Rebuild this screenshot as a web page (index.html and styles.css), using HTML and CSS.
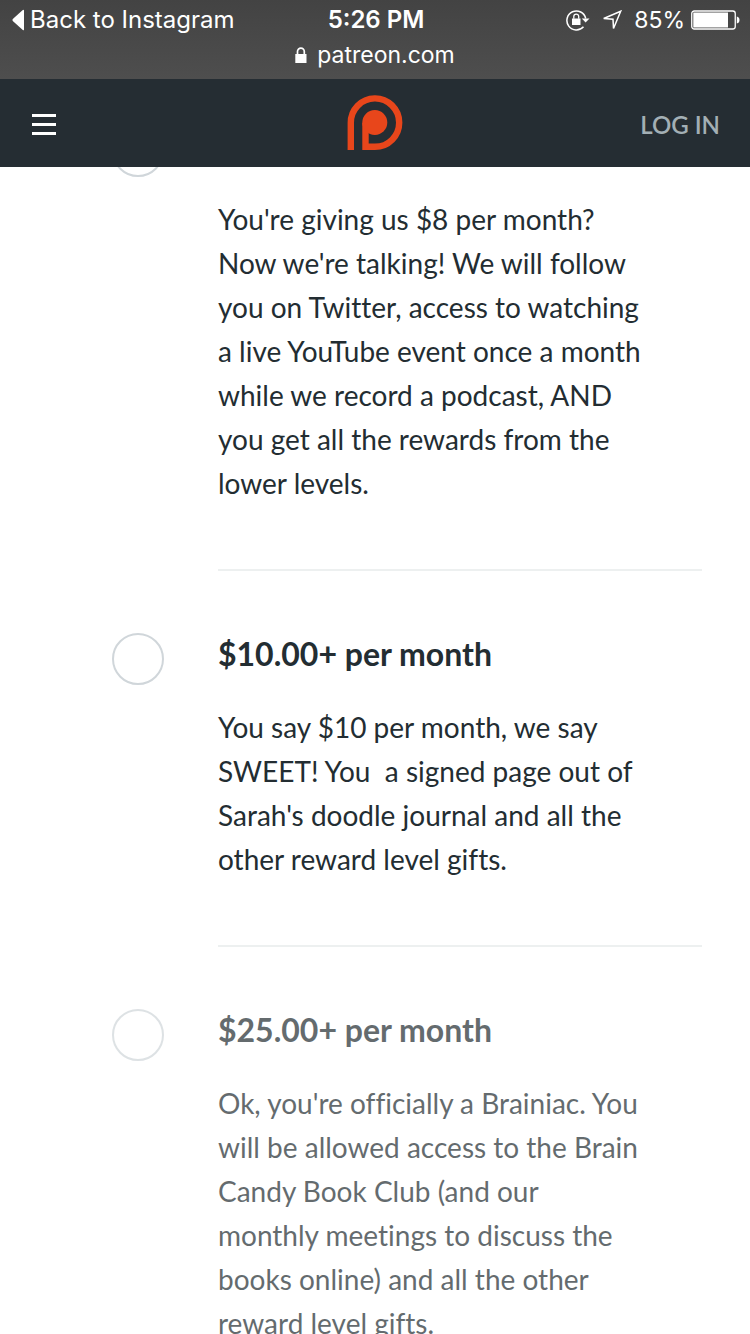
FILE: index.html
```html
<!DOCTYPE html>
<html lang="en">
<head>
<meta charset="utf-8">
<meta name="viewport" content="width=device-width, initial-scale=1">
<title>Patreon</title>
<link rel="stylesheet" href="styles.css">
</head>
<body>
<div class="status">
  <div class="status-row">
    <a class="back" href="#">
      <svg width="12" height="22" viewBox="0 0 12 22" aria-hidden="true"><path d="M12 1.500V20.500Q12 22 10.500 20.800L.8 12Q0 11 .8 10L10.500 1.200Q12 0 12 1.500Z" fill="#fff"/></svg>
      Back to Instagram
    </a>
    <time class="clock">5:26 PM</time>
    <div class="indicators">
      <svg class="lock-rotation" width="24" height="22" viewBox="0 0 24 22" aria-hidden="true">
        <path d="M17.500 17.800A9.500 9.500 0 1 1 19.700 9.500" fill="none" stroke="#fff" stroke-width="1.500"/>
        <path d="M15.800 9.500H23.500L19.600 13.500Z" fill="#fff"/>
        <path d="M6 9.500h8.500v6.500H6z" fill="#fff"/>
        <path d="M7.800 9.800V7.500a2.450 2.450 0 0 1 4.900 0V9.800" fill="none" stroke="#fff" stroke-width="1.300"/>
      </svg>
      <svg class="location" width="20" height="20" viewBox="0 0 20 20" aria-hidden="true"><path d="M18.700 1.200L1.700 8.500L11 9.200L11.500 18.500Z" fill="none" stroke="#fff" stroke-width="1.500"/></svg>
      <span>85%</span>
      <svg width="49" height="20" viewBox="0 0 49 20" aria-hidden="true">
        <rect x=".75" y="1" width="43.500" height="18" rx="2.500" fill="none" stroke="#fff" stroke-width="1.300"/>
        <path d="M2.300 2.600H37V17.400H2.300ZM45.800 6.500Q48.500 7 48.500 10T45.800 13.500Z" fill="#fff"/>
      </svg>
    </div>
  </div>
  <div class="address">
    <svg width="12" height="16" viewBox="0 0 12 16" aria-hidden="true"><path d="M.3 7h11.200v9H.3z" fill="#fff"/><path d="M2.500 7.500V4.500a3.400 3.400 0 0 1 6.800 0V7.500" fill="none" stroke="#fff" stroke-width="1.700"/></svg>
    <span>patreon.com</span>
  </div>
</div>
<header class="nav">
  <button class="menu" type="button" aria-label="Menu">
    <svg width="28" height="24" viewBox="0 0 28 24"><path d="M2 3.500H26M2 12.500H26M2 21.500H26" stroke="#fff" stroke-width="3.200"/></svg>
  </button>
  <a class="logo" href="#" aria-label="Patreon">
    <svg width="56" height="56" viewBox="0 0 56 56"><path d="M3.800 55V28A24.200 24.200 0 1 1 28 51.800H18.500V28" fill="none" stroke="#e8461b" stroke-width="6.400"/><circle cx="27.800" cy="27.500" r="12.500" fill="#e8461b"/></svg>
  </a>
  <a class="login" href="#">LOG IN</a>
</header>
<main class="rewards">
  <section class="tier tier-partial">
    <input class="choice" type="radio" name="tier" id="tier-8" aria-labelledby="text-8">
    <label class="details" for="tier-8">
      <span class="text" id="text-8">You're giving us $8 per month? Now we're talking! We will follow you on Twitter, access to watching a live YouTube event once a month while we record a podcast, AND you get all the rewards from the lower levels.</span>
    </label>
  </section>
  <section class="tier">
    <input class="choice" type="radio" name="tier" id="tier-10">
    <label class="details" for="tier-10">
      <strong class="amount">$10.00+ per month</strong>
      <span class="text">You say $10 per month, we say SWEET! You&nbsp; a signed page out of Sarah's doodle journal and all the other reward level gifts.</span>
    </label>
  </section>
  <section class="tier tier-unavailable">
    <input class="choice" type="radio" name="tier" id="tier-25">
    <label class="details" for="tier-25">
      <strong class="amount">$25.00+ per month</strong>
      <span class="text">Ok, you're officially a Brainiac. You will be allowed access to the Brain Candy Book Club (and our monthly meetings to discuss the books online) and all the other reward level gifts.</span>
    </label>
  </section>
</main>
</body>
</html>
```
FILE: styles.css
```css
* {
  box-sizing: border-box;
}

body {
  display: flex;
  flex-direction: column;
  height: 100vh;
  margin: 0;
  overflow: hidden;
  background: #fff;
  color: #232d32;
  font-family: Lato, "Liberation Sans", sans-serif;
}

a {
  color: inherit;
  text-decoration: none;
}

svg {
  display: block;
  flex: none;
}

.status {
  flex: none;
  padding: 4px 12px 8px;
  background: linear-gradient(#434343, #4e4e4e);
  color: #fff;
  font-family: Inter, "Liberation Sans", sans-serif;
  font-size: 23px;
  line-height: 32px;
}

.status-row {
  display: grid;
  grid-template-columns: 1fr auto 1fr;
  align-items: center;
  margin-right: -2px;
}

.back {
  display: flex;
  align-items: center;
  gap: 6px;
  font-size: 24px;
}

.clock {
  font-size: 24px;
  font-weight: 600;
}

.indicators {
  display: flex;
  align-items: center;
  justify-content: flex-end;
  gap: 6px;
}

.lock-rotation {
  margin-right: 6px;
}

.location {
  margin-right: 6px;
}

.address {
  display: flex;
  align-items: center;
  justify-content: center;
  gap: 10px;
  padding-top: 3px;
}

.nav {
  display: grid;
  flex: none;
  grid-template-columns: 1fr auto 1fr;
  align-items: center;
  padding: 16px 30px;
  background: #252d33;
}

.menu {
  justify-self: start;
  padding: 2px 0 0;
  border: 0;
  background: none;
}

.login {
  justify-self: end;
  padding-top: 4px;
  color: #a3afb5;
  font-size: 24px;
  font-weight: 600;
  line-height: 32px;
}

.rewards {
  flex: 1;
  min-height: 0;
  overflow: hidden;
}

.tier {
  display: grid;
  grid-template-columns: 52px 1fr;
  align-items: start;
  column-gap: 54px;
  padding: 0 48px 0 112px;
}

.choice {
  appearance: none;
  width: 52px;
  height: 52px;
  margin: 62px 0 0;
  border: 2px solid #d0d6da;
  border-radius: 50%;
  background: #fff;
}

.details {
  display: block;
  padding: 61px 60px 64px 0;
  border-bottom: 2px solid #edf0f0;
}

.tier-partial .choice {
  margin-top: -42px;
}

.tier-partial .details {
  padding-top: 30px;
}

.tier-unavailable {
  opacity: 0.7;
}

.amount {
  display: block;
  margin-bottom: 29px;
  font-size: 32px;
  font-weight: 700;
  line-height: 44px;
}

.text {
  display: block;
  font-size: 28px;
  font-variant-ligatures: none;
  line-height: 44px;
}
```
